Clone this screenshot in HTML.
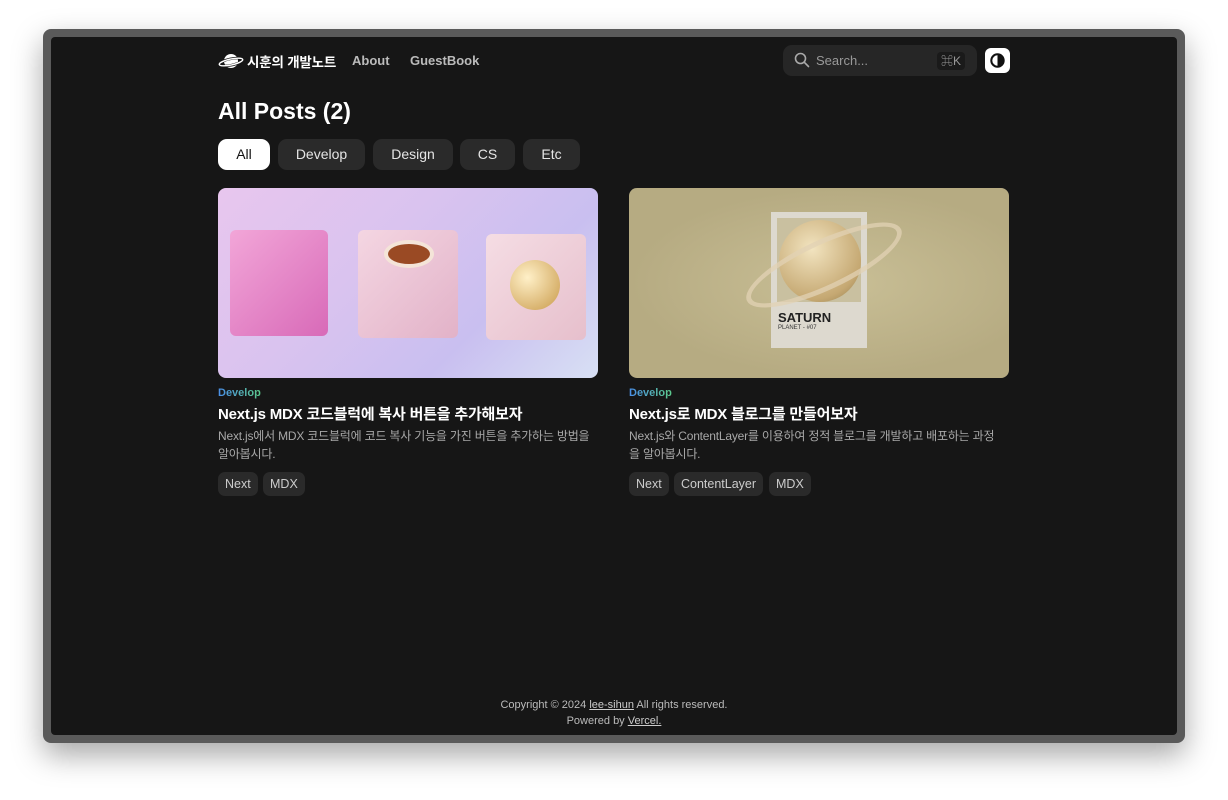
<!DOCTYPE html>
<html><head><meta charset="utf-8"><style>
*{margin:0;padding:0;box-sizing:border-box}
body{width:1228px;height:800px;background:#fff;font-family:"Liberation Sans","Noto Sans CJK KR",sans-serif;position:relative;overflow:hidden}
.frame{position:absolute;left:43px;top:29px;width:1142px;height:714px;background:#5a5a5a;border-radius:8px;box-shadow:0 12px 30px rgba(0,0,0,.35)}
.win{position:absolute;left:51px;top:37px;width:1126px;height:698px;background:#161616;border-radius:4px;color:#fff}
.abs{position:absolute}
.nav a{position:absolute;top:16px;font-size:13px;font-weight:bold;color:#bbb}
.chip{position:absolute;top:102px;height:31px;border-radius:9px;background:#2a2a2a;color:#e5e5e5;font-size:14px;line-height:31px;text-align:center}
.img{position:absolute;top:151px;width:380px;height:190px;border-radius:8px;overflow:hidden}
.cat{position:absolute;top:350px;font-size:11px;font-weight:bold;background:linear-gradient(90deg,#4a8fe8,#5cc98a);-webkit-background-clip:text;color:transparent}
.t{position:absolute;top:366px;font-size:15px;font-weight:bold;color:#fff;letter-spacing:-0.2px}
.d{position:absolute;top:390px;width:376px;font-size:12px;line-height:18px;color:#a8a8a8;letter-spacing:-0.2px}
.tag{position:absolute;top:435px;height:24px;border-radius:7px;background:#2a2a2a;color:#ccc;font-size:12.5px;line-height:24px;padding:0 7px}
.foot{position:absolute;top:660px;width:100%;text-align:center;font-size:11px;line-height:16px;color:#bbb}
.foot u{color:#ccc}
</style></head><body>
<div class="frame"></div>
<div class="win">
<svg class="abs" style="left:167px;top:15px" width="26" height="18" viewBox="0 0 26 18"><ellipse cx="13" cy="9" rx="7" ry="7" fill="#fff"/><ellipse cx="13" cy="10" rx="12" ry="3.2" fill="none" stroke="#161616" stroke-width="2.6" transform="rotate(-12 13 10)"/><ellipse cx="13" cy="10" rx="12" ry="3" fill="none" stroke="#fff" stroke-width="1.4" transform="rotate(-12 13 10)"/></svg>
<div class="abs" style="left:196px;top:14px;font-size:13.5px;font-weight:bold;letter-spacing:-0.2px">시훈의 개발노트</div>
<div class="nav"><a style="left:301px">About</a><a style="left:359px">GuestBook</a></div>
<div class="abs" style="left:732px;top:8px;width:194px;height:31px;border-radius:9px;background:#262626"></div>
<svg class="abs" style="left:743px;top:15px" width="16" height="16" viewBox="0 0 16 16"><circle cx="6.5" cy="6.5" r="5" fill="none" stroke="#aaa" stroke-width="1.6"/><path d="M10.2 10.2L14.5 14.5" stroke="#aaa" stroke-width="1.6" stroke-linecap="round"/></svg>
<div class="abs" style="left:765px;top:16px;font-size:13px;color:#999">Search...</div>
<div class="abs" style="left:886px;top:15px;width:28px;height:18px;border-radius:4px;background:#1a1a1a;color:#999;font-size:12px;line-height:18px;text-align:center">⌘K</div>
<div class="abs" style="left:934px;top:11px;width:25px;height:25px;border-radius:6px;background:#fff"></div>
<svg class="abs" style="left:939px;top:16px" width="15" height="15" viewBox="0 0 15 15"><circle cx="7.5" cy="7.5" r="6.2" fill="none" stroke="#111" stroke-width="2"/><path d="M7.5 1.3A6.2 6.2 0 0 1 7.5 13.7Z" fill="#111"/></svg>
<div class="abs" style="left:167px;top:61px;font-size:23px;font-weight:bold">All Posts (2)</div>
<div class="chip" style="left:167px;width:52px;background:#fff;color:#111">All</div>
<div class="chip" style="left:227px;width:87px">Develop</div>
<div class="chip" style="left:322px;width:80px">Design</div>
<div class="chip" style="left:409px;width:55px">CS</div>
<div class="chip" style="left:472px;width:57px">Etc</div>
<div class="img" style="left:167px;background:linear-gradient(135deg,#e8c6ee 0%,#d9c3ef 40%,#c9bff0 70%,#d8e0f4 100%)">
<div class="abs" style="left:12px;top:42px;width:98px;height:106px;background:linear-gradient(135deg,#f2a6d8,#d86ab8);border-radius:6px"></div>
<div class="abs" style="left:140px;top:42px;width:100px;height:108px;background:linear-gradient(135deg,#f4d6e2,#e2b2c8);border-radius:6px"></div>
<div class="abs" style="left:166px;top:52px;width:50px;height:28px;border-radius:50%;background:#9a4a24;border:4px solid #f4e4d8"></div>
<div class="abs" style="left:268px;top:46px;width:100px;height:106px;background:linear-gradient(135deg,#f5dde4,#e6bfcc);border-radius:6px"></div>
<div class="abs" style="left:292px;top:72px;width:50px;height:50px;border-radius:50%;background:radial-gradient(circle at 35% 35%,#fff0c8,#c99a4a)"></div>
</div>
<div class="img" style="left:578px;background:radial-gradient(ellipse at 55% 50%,#c9bf96,#b6ab82 70%)">
<div class="abs" style="left:142px;top:24px;width:96px;height:136px;background:#ddd9cf"></div>
<div class="abs" style="left:148px;top:30px;width:84px;height:84px;background:#c9c0a0"></div>
<div class="abs" style="left:150px;top:32px;width:82px;height:82px;border-radius:50%;background:radial-gradient(circle at 40% 35%,#f2e4c0,#c5a872 70%,#8c7648)"></div>
<div class="abs" style="left:110px;top:52px;width:170px;height:50px;border-radius:50%;border:5px solid rgba(225,210,180,.75);transform:rotate(-25deg)"></div>
<div class="abs" style="left:149px;top:122px;font-size:13px;font-weight:bold;color:#222">SATURN</div>
<div class="abs" style="left:149px;top:137px;font-size:6px;color:#333">PLANET - #07</div>
</div>
<div class="cat" style="left:167px">Develop</div>
<div class="t" style="left:167px">Next.js MDX 코드블럭에 복사 버튼을 추가해보자</div>
<div class="d" style="left:167px">Next.js에서 MDX 코드블럭에 코드 복사 기능을 가진 버튼을 추가하는 방법을<br>알아봅시다.</div>
<div class="tag" style="left:167px">Next</div><div class="tag" style="left:212px">MDX</div>
<div class="cat" style="left:578px">Develop</div>
<div class="t" style="left:578px">Next.js로 MDX 블로그를 만들어보자</div>
<div class="d" style="left:578px">Next.js와 ContentLayer를 이용하여 정적 블로그를 개발하고 배포하는 과정<br>을 알아봅시다.</div>
<div class="tag" style="left:578px">Next</div><div class="tag" style="left:623px">ContentLayer</div><div class="tag" style="left:718px">MDX</div>
<div class="foot">Copyright © 2024 <u>lee-sihun</u> All rights reserved.<br>Powered by <u>Vercel.</u></div>
</div>
</body></html>
